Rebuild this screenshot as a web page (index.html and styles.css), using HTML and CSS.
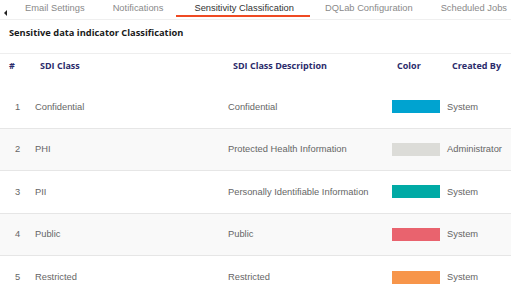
FILE: index.html
```html
<!DOCTYPE html>
<html>
<head>
<meta charset="utf-8">
<link rel="stylesheet" href="styles.css">
</head>
<body>
<div class="page">
  <div class="tabs">
    <span class="arrow"></span>
    <span class="tab">Email Settings</span>
    <span class="tab">Notifications</span>
    <span class="tab active">Sensitivity Classification</span>
    <span class="tab">DQLab Configuration</span>
    <span class="tab">Scheduled Jobs</span>
  </div>
  <div class="title">Sensitive data indicator Classification</div>
  <div class="table">
    <div class="row head">
      <div class="c num">#</div>
      <div class="c">SDI Class</div>
      <div class="c">SDI Class Description</div>
      <div class="c">Color</div>
      <div class="c">Created By</div>
    </div>
    <div class="row">
      <div class="c num">1</div>
      <div class="c">Confidential</div>
      <div class="c">Confidential</div>
      <div class="c"><span class="swatch blue"></span></div>
      <div class="c">System</div>
    </div>
    <div class="row alt">
      <div class="c num">2</div>
      <div class="c">PHI</div>
      <div class="c">Protected Health Information</div>
      <div class="c"><span class="swatch grey"></span></div>
      <div class="c">Administrator</div>
    </div>
    <div class="row">
      <div class="c num">3</div>
      <div class="c">PII</div>
      <div class="c">Personally Identifiable Information</div>
      <div class="c"><span class="swatch teal"></span></div>
      <div class="c">System</div>
    </div>
    <div class="row alt">
      <div class="c num">4</div>
      <div class="c">Public</div>
      <div class="c">Public</div>
      <div class="c"><span class="swatch red"></span></div>
      <div class="c">System</div>
    </div>
    <div class="row last">
      <div class="c num">5</div>
      <div class="c">Restricted</div>
      <div class="c">Restricted</div>
      <div class="c"><span class="swatch orange"></span></div>
      <div class="c">System</div>
    </div>
  </div>
</div>
</body>
</html>
```

FILE: styles.css
```css
html, body {
  margin: 0;
  padding: 0;
  background: #fff;
}
.page {
  width: 511px;
  height: 296px;
  overflow: hidden;
  font-family: "Liberation Sans", Arial, sans-serif;
}
.tabs {
  display: flex;
  align-items: stretch;
  height: 20px;
  border-bottom: 1px solid #efefef;
  box-sizing: border-box;
}
.arrow {
  width: 0;
  height: 0;
  margin: 10px 4px 0 4px;
  border-top: 3px solid transparent;
  border-bottom: 3px solid transparent;
  border-right: 3px solid #222;
  align-self: flex-start;
}
.tab {
  padding: 3px 14px 0;
  font-size: 9.33px;
  color: #8a8a8a;
  position: relative;
  white-space: nowrap;
}
.tab.active {
  color: #333;
  padding: 3px 17px 0;
}
.tab.active::after {
  content: "";
  position: absolute;
  left: -1px;
  right: 1px;
  top: 15px;
  height: 2px;
  background: #ef4a23;
}
.title {
  height: 34px;
  box-sizing: border-box;
  padding: 6px 9px 0;
  font-family: "Open Sans", sans-serif;
  font-weight: bold;
  font-size: 9.3px;
  color: #1a1a1a;
  border-bottom: 1px solid #eee;
}
.row {
  display: grid;
  grid-template-columns: 26px 193px 164px 55px 1fr;
  padding-left: 9px;
  height: 42.5px;
  box-sizing: border-box;
  align-items: center;
  border-bottom: 1px solid #e6e6e6;
  font-size: 9.33px;
  color: #666;
}
.row.alt {
  background: #f9f9f9;
}
.row.last {
  border-bottom: none;
}
.row.head {
  height: 32px;
  align-items: start;
  padding-top: 5px;
  border-bottom: none;
  font-family: "Open Sans", sans-serif;
  font-weight: bold;
  font-size: 9px;
  color: #2b2b6b;
}
.row.head .c {
  padding-left: 5px;
}
.row.head .c.num {
  padding-left: 0;
}
.num {
  padding-left: 6px;
}
.swatch {
  display: block;
  width: 48px;
  height: 13px;
}
.blue { background: #00a3d0; }
.grey { background: #dcdcd8; }
.teal { background: #00aaa5; }
.red { background: #e9636e; }
.orange { background: #f7954a; }
```
